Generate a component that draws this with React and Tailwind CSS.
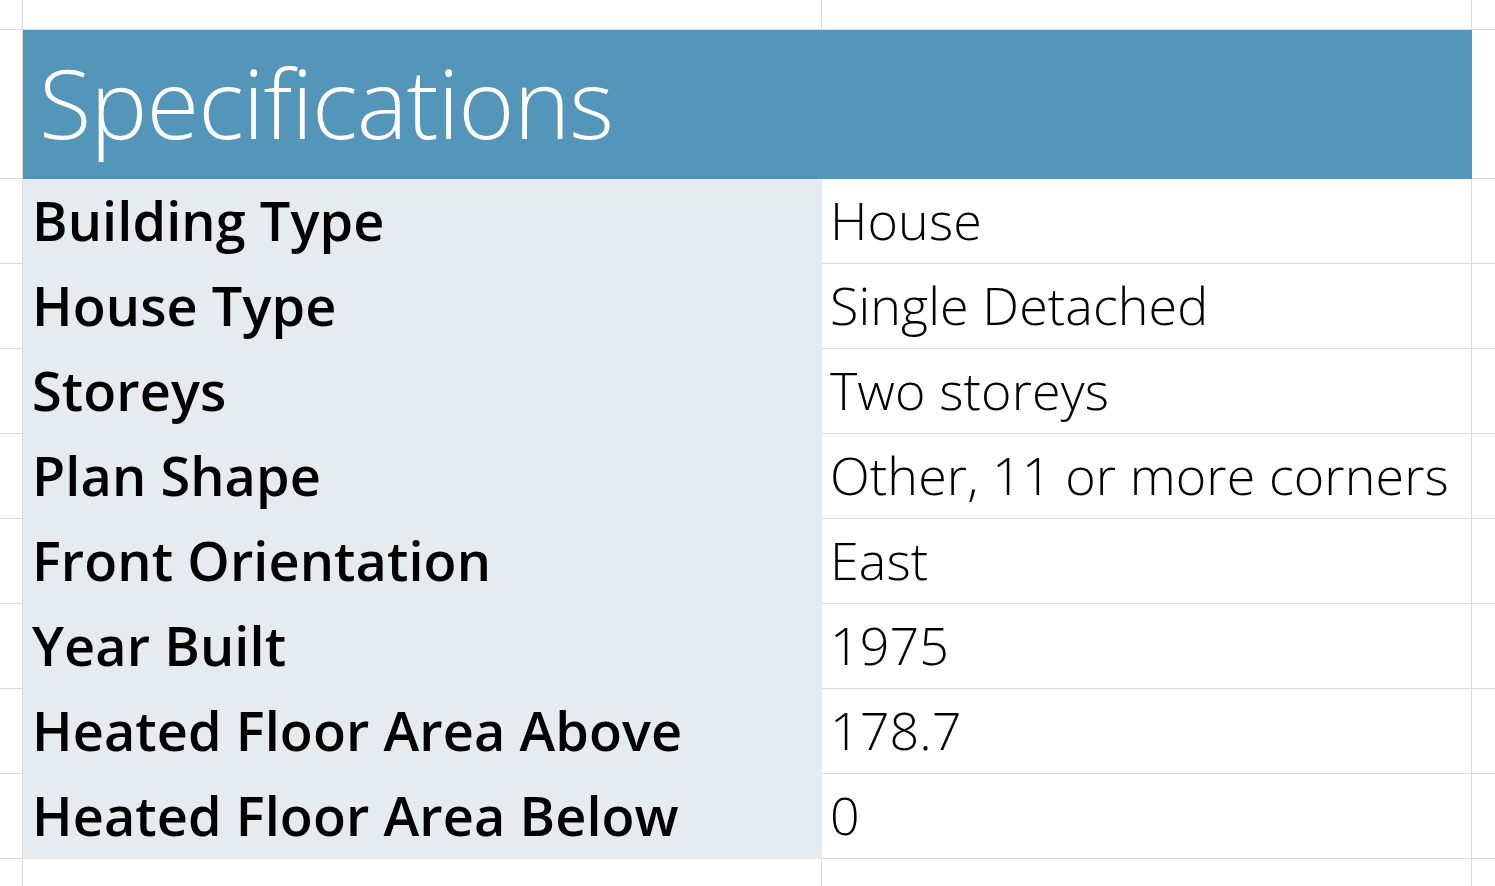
import React from "react";

const rows = [
  ["Building Type", "House"],
  ["House Type", "Single Detached"],
  ["Storeys", "Two storeys"],
  ["Plan Shape", "Other, 11 or more corners"],
  ["Front Orientation", "East"],
  ["Year Built", "1975"],
  ["Heated Floor Area Above", "178.7"],
  ["Heated Floor Area Below", "0"],
];

const font = { fontFamily: '"Open Sans", "Noto Sans", sans-serif' };

export default function App() {
  const g = "border-r border-b border-[#dadada]";
  return (
    <div
      className="w-[1495px] h-[886px] overflow-hidden bg-white grid grid-cols-[23px_799px_650px_23px] grid-rows-[30px_149px_repeat(8,85px)_27px]"
      style={font}
    >
      {/* row 1 */}
      <div className={g} />
      <div className={g} />
      <div className={g} />
      <div className="border-b border-[#dadada]" />

      {/* header row */}
      <div className={g} />
      <div className="col-span-2 bg-[#5495ba] flex items-end pl-[16px] pb-[29px]">
        <span className="text-white font-light text-[96px] leading-none tracking-[-1px]">
          Specifications
        </span>
      </div>
      <div className="border-b border-[#dadada]" />

      {rows.map(([label, value]) => (
        <React.Fragment key={label}>
          <div className={g} />
          <div className="bg-[#e6ebf0] flex items-end pl-[9px] pb-[17px]">
            <span className="text-black font-semibold text-[54px] leading-none whitespace-nowrap tracking-[0.1px]">
              {label}
            </span>
          </div>
          <div className={`${g} flex items-end pl-[8px] pb-[17px]`}>
            <span className="text-black font-[350] text-[52px] leading-none whitespace-nowrap tracking-[0.1px]">
              {value}
            </span>
          </div>
          <div className="border-b border-[#dadada]" />
        </React.Fragment>
      ))}

      {/* last row */}
      <div className="border-r border-[#dadada]" />
      <div className="border-r border-[#dadada]" />
      <div className="border-r border-[#dadada]" />
      <div />
    </div>
  );
}
